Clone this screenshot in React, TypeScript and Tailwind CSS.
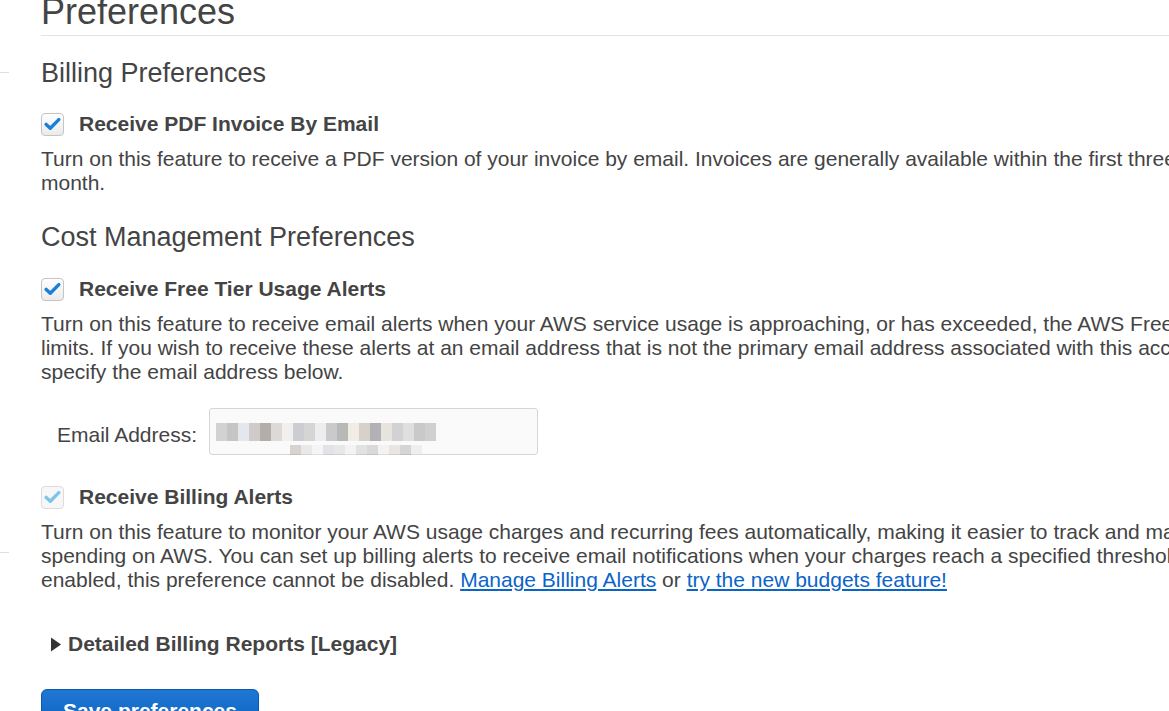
import React from "react";

function Check({ disabled }: { disabled?: boolean }) {
  return (
    <span
      className={
        "flex h-[23px] w-[23px] shrink-0 items-center justify-center rounded-[4px] border " +
        (disabled
          ? "border-[#dcdcdc] bg-[#f7f7f7]"
          : "border-[#c4c4c4] bg-gradient-to-b from-[#ffffff] to-[#ebebeb]")
      }
    >
      <svg width="17" height="14" viewBox="0 0 17 14">
        <path
          d="M2.2 7.4 L6.3 11.2 L14.8 2.6"
          fill="none"
          stroke={disabled ? "#7ec4ea" : "#1a7fd6"}
          strokeWidth="3.4"
          strokeLinecap="round"
          strokeLinejoin="round"
        />
      </svg>
    </span>
  );
}

function CheckRow({ label, disabled }: { label: string; disabled?: boolean }) {
  return (
    <div className="flex h-6 items-center gap-[15px]">
      <Check disabled={disabled} />
      <span className="whitespace-nowrap text-[21px] font-bold leading-6 text-[#444]">{label}</span>
    </div>
  );
}

const blur = [
  "bg-[#c9c9c9]",
  "bg-[#b8b8b8]",
  "bg-[#dfe3ea]",
  "bg-[#c4c1bd]",
  "bg-[#a39b95]",
  "bg-[#d6d2cf]",
  "bg-[#eeeeee]",
  "bg-[#c0c2ca]",
  "bg-[#cccccc]",
  "bg-[#e9eaee]",
  "bg-[#bfbfbf]",
  "bg-[#a8a8a8]",
  "bg-[#efe9df]",
  "bg-[#d0c6c0]",
  "bg-[#9fa0a6]",
  "bg-[#e3ded8]",
  "bg-[#c9c9c9]",
  "bg-[#d9d9d9]",
  "bg-[#bdbdbd]",
  "bg-[#c6c6c6]",
];

export default function App() {
  return (
    <div
      className="relative h-[711px] w-[1169px] overflow-hidden bg-white text-[#444]"
      style={{ fontFamily: '"Liberation Sans", Arial, sans-serif' }}
    >
      <div className="flex">
        <div className="flex w-[9px] shrink-0 flex-col">
          <div className="mt-[72px] border-t border-[#dedede]" />
          <div className="mt-[479px] border-t border-[#dedede]" />
        </div>
        <div className="ml-[32px] flex w-[1400px] shrink-0 flex-col">
          <h1 className="mt-[-8px] border-b border-[#e3e3e3] pb-[3px] text-[36px] font-normal leading-[40px] text-[#444]">
            Preferences
          </h1>

          <h2 className="mt-[22px] text-[27px] font-normal leading-[30px]">Billing Preferences</h2>
          <div className="mt-[24px]">
            <CheckRow label="Receive PDF Invoice By Email" />
          </div>
          <p className="mt-[11px] whitespace-nowrap text-[21px] leading-6">
            Turn on this feature to receive a PDF version of your invoice by email. Invoices are generally available within the first three days of the
            <br />
            month.
          </p>

          <h2 className="mt-[27px] text-[27px] font-normal leading-[30px]">Cost Management Preferences</h2>
          <div className="mt-[25px]">
            <CheckRow label="Receive Free Tier Usage Alerts" />
          </div>
          <p className="mt-[11px] whitespace-nowrap text-[21px] leading-6">
            Turn on this feature to receive email alerts when your AWS service usage is approaching, or has exceeded, the AWS Free Tier usage
            <br />
            limits. If you wish to receive these alerts at an email address that is not the primary email address associated with this account, please
            <br />
            specify the email address below.
          </p>

          <div className="mt-[24px] flex items-center pl-[16px]">
            <span className="w-[152px] pt-[6px] text-[21px] leading-6">Email Address:</span>
            <div className="relative h-[47px] w-[329px] rounded-[3px] border border-[#d6d6d6] bg-[#fafafa]">
              <div className="absolute left-[6px] top-[14px] flex h-[18px] opacity-80">
                {blur.map((c, i) => (
                  <div key={i} className={"h-full w-[11px] " + c} />
                ))}
              </div>
              <div className="absolute left-[80px] top-[36px] flex h-[10px] opacity-40">
                {blur.slice(4, 16).map((c, i) => (
                  <div key={i} className={"h-full w-[11px] " + c} />
                ))}
              </div>
            </div>
          </div>

          <div className="mt-[30px]">
            <CheckRow label="Receive Billing Alerts" disabled />
          </div>
          <p className="mt-[11px] whitespace-nowrap text-[21px] leading-6">
            Turn on this feature to monitor your AWS usage charges and recurring fees automatically, making it easier to track and manage your
            <br />
            spending on AWS. You can set up billing alerts to receive email notifications when your charges reach a specified threshold. Once
            <br />
            enabled, this preference cannot be disabled.{" "}
            <a className="text-[#0b64c8] underline" href="#">
              Manage Billing Alerts
            </a>{" "}
            or{" "}
            <a className="text-[#0b64c8] underline" href="#">
              try the new budgets feature!
            </a>
          </p>

          <div className="mt-[40px] flex h-6 items-center gap-[6px] pl-[9px]">
            <svg width="12" height="17" viewBox="0 0 12 17">
              <path d="M1 1.5 L11 8.5 L1 15.5 Z" fill="#333" />
            </svg>
            <span className="whitespace-nowrap text-[21px] font-bold leading-6 text-[#444]">
              Detailed Billing Reports [Legacy]
            </span>
          </div>

          <div className="mt-[33px]">
            <button className="h-[44px] w-[218px] rounded-[6px] border border-[#0a57b0] bg-gradient-to-b from-[#1f77d3] to-[#0c60c0] pl-[21px] text-left text-[21px] font-bold leading-6 text-white">
              Save preferences
            </button>
          </div>
        </div>
      </div>
    </div>
  );
}
